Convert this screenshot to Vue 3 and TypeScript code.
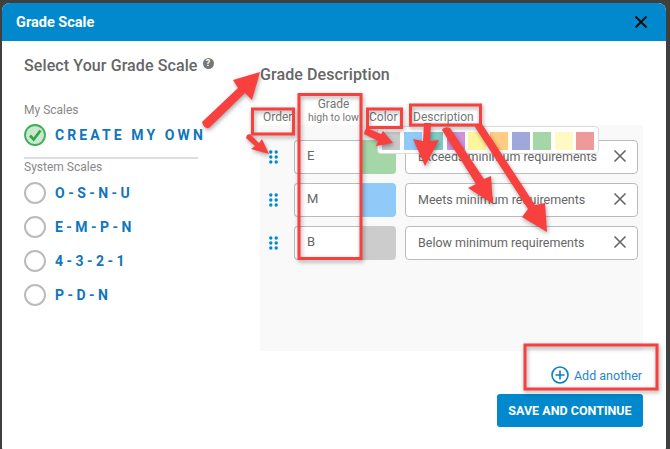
<script setup lang="ts">
const myScale = 'CREATE MY OWN';
const systemScales = ['O - S - N - U', 'E - M - P - N', '4 - 3 - 2 - 1', 'P - D - N'];
const rows = [
  { grade: 'E', color: '#a5d6a7', text: 'Exceeds minimum requirements' },
  { grade: 'M', color: '#90caf9', text: 'Meets minimum requirements' },
  { grade: 'B', color: '#cccccc', text: 'Below minimum requirements' },
];
const palette = ['#c9c9c9', '#90caf9', '#80cbc4', '#ce93d8', '#fff59d', '#ffcc80', '#9fa8da', '#a5d6a7', '#fff9c4', '#ef9a9a'];
const boxes = [
  { x: 252.5, y: 109, w: 41, h: 25 },
  { x: 299, y: 94.5, w: 62, h: 164 },
  { x: 367.5, y: 109, w: 34, h: 18.5 },
  { x: 410.5, y: 105, w: 70, h: 20 },
  { x: 525, y: 345, w: 132, h: 44 },
];
const arrows = [
  'M202 122 L238 88 L233 80 L260 72 L252 100 L245 93 L209 128 Q204 129 202 122 Z',
  'M247 135 L250 134 L259 143 L262 139 L269 154 L251 149 L255 146 L246 138 Z',
  'M365 130 L367 128 L381 134 L383 131 L393 143 L376 146 L378 141 L364 134 Z',
  'M424 123 L431 123 L430 141 L439 140 L425 166 L413 139 L423 141 Z',
  'M442 130 Q444 126 450 128 L484 179 L491 176 L493 204 L468 188 L476 184 Z',
  'M475 127 Q477 122 482 124 L535 205 L545 203 L547 232 L522 217 L528 209 Z',
];
</script>

<template>
  <div class="screen">
    <div class="modal">
      <header class="modal-header">
        <span>Grade Scale</span>
        <svg class="close" width="14" height="14" viewBox="0 0 14 14">
          <path d="M1.5 1.5 L12.5 12.5 M12.5 1.5 L1.5 12.5" stroke="#111" stroke-width="2" fill="none" />
        </svg>
      </header>

      <div class="modal-body">
        <aside class="scales">
          <h2 class="scales-title">
            Select Your Grade Scale
            <span class="help">?</span>
          </h2>
          <div class="group-label">My Scales</div>
          <div class="scale-row own">
            <svg class="check" width="22" height="22" viewBox="0 0 22 22">
              <circle cx="11" cy="11" r="10" fill="#c8e8cf" stroke="#3fae55" stroke-width="1.8" />
              <path d="M6 11.5 L9.7 15.5 L16.5 6.5" stroke="#2fa548" stroke-width="2.6" fill="none" />
            </svg>
            <span>{{ myScale }}</span>
          </div>
          <div class="divider"></div>
          <div class="group-label system">System Scales</div>
          <div v-for="scale in systemScales" :key="scale" class="scale-row">
            <span class="radio"></span>
            <span>{{ scale }}</span>
          </div>
        </aside>

        <section class="details">
          <h2 class="details-title">Grade Description</h2>
          <div class="table-head">
            <span>Order</span>
            <span class="grade-head">Grade<small>high to low</small></span>
            <span class="color-head">Color</span>
            <span class="desc-head">Description</span>
          </div>
          <div class="panel">
            <div class="palette">
              <i v-for="c in palette" :key="c" :style="{ background: c }"></i>
            </div>
            <div v-for="row in rows" :key="row.grade" class="grade-row">
              <svg class="grip" width="9" height="14" viewBox="0 0 9 14">
                <g fill="#0288d1">
                  <circle cx="1.8" cy="2" r="1.7" /><circle cx="7.2" cy="2" r="1.7" />
                  <circle cx="1.8" cy="7" r="1.7" /><circle cx="7.2" cy="7" r="1.7" />
                  <circle cx="1.8" cy="12" r="1.7" /><circle cx="7.2" cy="12" r="1.7" />
                </g>
              </svg>
              <div class="grade-input">{{ row.grade }}</div>
              <div class="swatch" :style="{ background: row.color }"></div>
              <div class="desc-input">
                <span>{{ row.text }}</span>
                <svg width="14" height="14" viewBox="0 0 14 14">
                  <path d="M1.5 1.5 L12.5 12.5 M12.5 1.5 L1.5 12.5" stroke="#666" stroke-width="1.6" fill="none" />
                </svg>
              </div>
            </div>
          </div>
          <div class="add-row">
            <svg width="18" height="18" viewBox="0 0 18 18">
              <circle cx="9" cy="9" r="8" fill="none" stroke="#0b7fc4" stroke-width="1.6" />
              <path d="M9 4.5 V13.5 M4.5 9 H13.5" stroke="#0b7fc4" stroke-width="1.6" />
            </svg>
            <span>Add another</span>
          </div>
          <div class="actions">
            <button class="save">SAVE AND CONTINUE</button>
          </div>
        </section>
      </div>
    </div>

    <svg class="marks" width="670" height="449" viewBox="0 0 670 449">
      <g class="shadowed">
        <rect v-for="(b, i) in boxes" :key="i" :x="b.x" :y="b.y" :width="b.w" :height="b.h" fill="none" stroke="#f8403f" stroke-width="3" />
        <path v-for="(d, i) in arrows" :key="i" :d="d" fill="#f8403f" />
      </g>
    </svg>
  </div>
</template>

<style>
html,
body {
  margin: 0;
  background: #3f3f3f;
}
</style>

<style scoped>
.screen {
  position: relative;
  width: 670px;
  height: 449px;
  overflow: hidden;
  background: #3f3f3f;
  font-family: Roboto, "Liberation Sans", sans-serif;
  color: #666;
}

.modal {
  margin: 3px 0 0 2px;
  width: 664px;
  height: 452px;
  background: #fff;
  border-radius: 8px;
  overflow: hidden;
}

.modal-header {
  display: flex;
  justify-content: space-between;
  align-items: center;
  height: 38px;
  padding: 0 18px 0 14px;
  background: #0288cc;
  color: #fff;
  font-size: 14.5px;
  font-weight: 700;
}

.modal-body {
  display: flex;
}

.scales {
  flex: none;
  width: 174px;
  padding: 0 62px 0 22px;
}

.scales-title {
  margin: 14px 0 0;
  font-size: 16px;
  line-height: 22px;
  font-weight: 500;
  letter-spacing: 0.1px;
  white-space: nowrap;
}

.help {
  display: inline-block;
  width: 11px;
  height: 11px;
  margin-left: 1px;
  border-radius: 50%;
  background: #777;
  color: #fff;
  font-size: 9px;
  font-weight: 700;
  line-height: 11px;
  letter-spacing: 0;
  text-align: center;
  vertical-align: 5px;
}

.group-label {
  margin-top: 25px;
  font-size: 12px;
  line-height: 16px;
  color: #888;
}

.group-label.system {
  margin: 0 0 1px;
}

.scale-row {
  display: flex;
  align-items: center;
  gap: 9px;
  height: 34px;
  font-size: 14px;
  font-weight: 700;
  color: #0f75bc;
  white-space: nowrap;
}

.scale-row.own {
  height: 22px;
  margin-top: 6px;
  letter-spacing: 3.1px;
}

.check {
  flex: none;
}

.divider {
  height: 2px;
  margin-top: 11px;
  background: #ddd;
}

.radio {
  flex: none;
  width: 18px;
  height: 18px;
  border: 2px solid #bbb;
  border-radius: 50%;
}

.details {
  flex: none;
  width: 383px;
}

.details-title {
  margin: 23px 0 0;
  font-size: 16px;
  line-height: 22px;
  font-weight: 500;
  letter-spacing: 0.1px;
}

.table-head {
  position: relative;
  height: 25px;
  margin-top: 14px;
  font-size: 12px;
  color: #777;
}

.table-head > span {
  position: absolute;
  top: 9px;
  line-height: 16px;
}

.table-head > span:first-child {
  left: 3px;
}

.table-head > .grade-head {
  top: -4px;
  left: 40px;
  width: 67px;
  text-align: center;
}

.grade-head small {
  display: block;
  margin-top: -2px;
  font-size: 10.5px;
}

.table-head > .color-head {
  left: 109px;
}

.table-head > .desc-head {
  left: 153px;
}

.panel {
  position: relative;
  height: 211px;
  padding: 15px 5px 0 0;
  background: #f9f9f9;
}

.palette {
  position: absolute;
  top: 1px;
  left: 117px;
  display: flex;
  gap: 3.6px;
  padding: 5px 4px 3px;
  background: #fff;
  border: 1px solid #ddd;
  border-radius: 4px;
  z-index: 1;
}

.palette i {
  display: block;
  width: 18px;
  height: 18px;
}

.grade-row {
  display: flex;
  align-items: center;
  height: 34px;
  margin-bottom: 9px;
}

.grip {
  flex: none;
  margin: 0 16px 0 9px;
}

.grade-input {
  box-sizing: border-box;
  flex: none;
  width: 68px;
  height: 100%;
  padding: 0 12px;
  background: #fff;
  border: 1px solid #bbb;
  border-right: 0;
  border-radius: 4px 0 0 4px;
  font-size: 13px;
  line-height: 30px;
}

.swatch {
  flex: none;
  width: 34px;
  height: 100%;
  border-radius: 0 4px 4px 0;
}

.desc-input {
  box-sizing: border-box;
  flex: none;
  display: flex;
  justify-content: space-between;
  align-items: center;
  width: 233px;
  height: 100%;
  margin-left: 9px;
  padding: 0 10px 2px 12px;
  background: #fff;
  border: 1px solid #bbb;
  border-radius: 4px;
  font-size: 12.5px;
  white-space: nowrap;
}

.add-row {
  display: flex;
  justify-content: flex-end;
  align-items: center;
  gap: 5px;
  height: 18px;
  margin-top: 15px;
  padding-right: 1px;
  font-size: 12.5px;
}

.add-row span {
  color: #2a86c8;
}

.actions {
  display: flex;
  justify-content: flex-end;
  margin-top: 10px;
}

.save {
  width: 146px;
  height: 33px;
  padding: 0;
  border: 0;
  border-radius: 3px;
  background: #0288cc;
  color: #fff;
  font-family: inherit;
  font-size: 12.5px;
  font-weight: 700;
}

.marks {
  position: absolute;
  top: 0;
  left: 0;
  z-index: 2;
  pointer-events: none;
}

.shadowed {
  filter: drop-shadow(1px 2px 2px rgba(0, 0, 0, 0.35));
}
</style>
